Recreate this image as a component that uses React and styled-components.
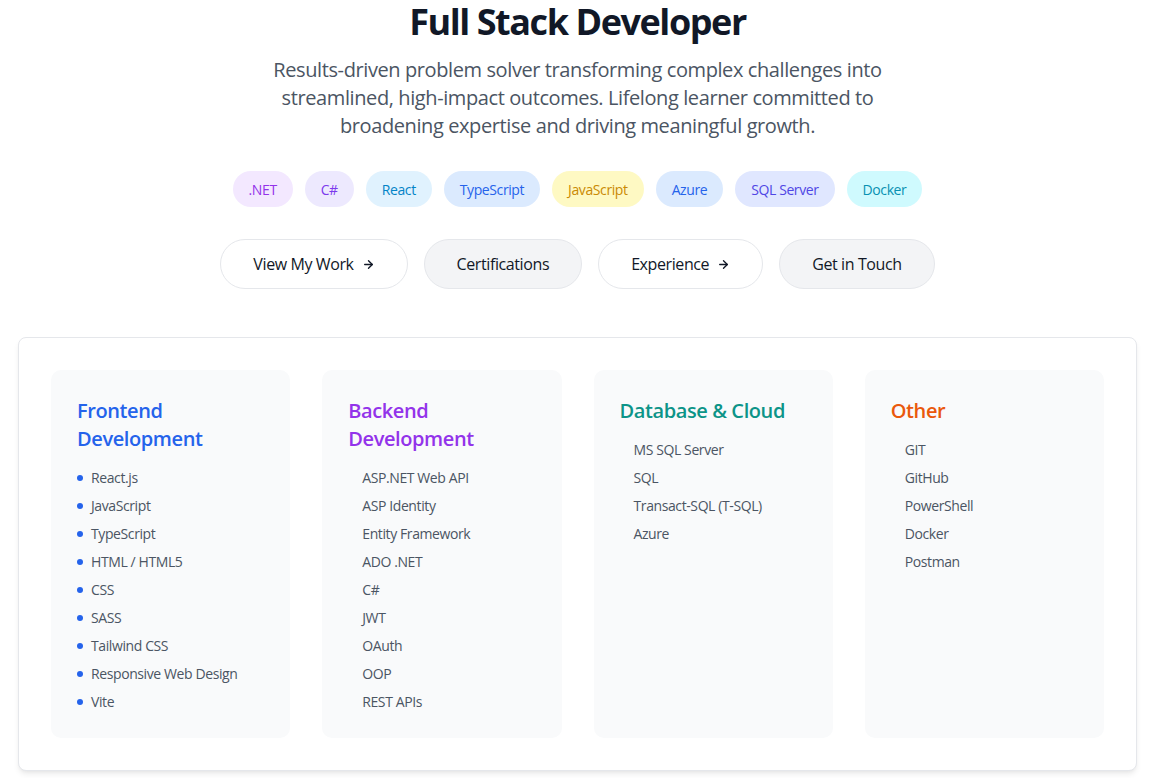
import React from "react";
import styled, { createGlobalStyle } from "styled-components";
import { ArrowRight } from "lucide-react";

const Global = createGlobalStyle`
  * { box-sizing: border-box; }
  html, body { margin: 0; padding: 0; background: #ffffff; }
  body {
    font-family: "Open Sans", "Noto Sans", "Liberation Sans", sans-serif;
    color: #111827;
    letter-spacing: -0.025em;
    -webkit-font-smoothing: antialiased;
  }
`;

const Page = styled.main`
  display: flex;
  flex-direction: column;
  align-items: center;
  padding: 2px 18px 40px;
`;

const Title = styled.h1`
  margin: 0 0 14px;
  font-size: 36px;
  line-height: 40px;
  font-weight: 700;
  letter-spacing: -0.04em;
  color: #111827;
  text-align: center;
`;

const Lead = styled.p`
  margin: 0 0 31px;
  max-width: 672px;
  font-size: 20px;
  line-height: 28px;
  color: #4b5563;
  text-align: center;
`;

const TagRow = styled.div`
  display: flex;
  flex-wrap: wrap;
  justify-content: center;
  gap: 12px;
  margin-bottom: 32px;
`;

const Tag = styled.span`
  display: inline-flex;
  align-items: center;
  height: 36px;
  padding: 0 16px;
  border-radius: 999px;
  font-size: 14px;
  background: ${(p) => p.$bg};
  color: ${(p) => p.$fg};
`;

const ButtonRow = styled.div`
  display: flex;
  justify-content: center;
  gap: 16px;
  margin-bottom: 48px;
`;

const Button = styled.button`
  display: inline-flex;
  align-items: center;
  gap: 8px;
  height: 50px;
  padding: 0 32px;
  border-radius: 999px;
  border: 1px solid #e5e7eb;
  background: ${(p) => (p.$muted ? "#f3f4f6" : "#ffffff")};
  color: #111827;
  font-family: inherit;
  letter-spacing: inherit;
  font-size: 16px;
  cursor: pointer;
`;

const Panel = styled.section`
  width: 100%;
  border: 1px solid #e5e7eb;
  border-radius: 8px;
  background: #ffffff;
  box-shadow: 0 4px 6px -1px rgba(0, 0, 0, 0.08), 0 2px 4px -2px rgba(0, 0, 0, 0.06);
  padding: 32px;
  display: grid;
  grid-template-columns: repeat(4, 1fr);
  gap: 32px;
`;

const Column = styled.div`
  background: #f9fafb;
  border-radius: 10px;
  padding: 27px 24px 26px 26px;
`;

const ColumnTitle = styled.h3`
  margin: 0 0 15px;
  font-size: 20px;
  line-height: 28px;
  font-weight: 600;
  color: ${(p) => p.$color};
`;

const List = styled.ul`
  list-style: none;
  margin: 0;
  padding: 0;
  display: flex;
  flex-direction: column;
  gap: 8px;
`;

const Item = styled.li`
  display: flex;
  align-items: center;
  gap: 8px;
  font-size: 14px;
  line-height: 20px;
  color: #4b5563;
`;

const Dot = styled.span`
  width: 6px;
  height: 6px;
  border-radius: 50%;
  flex: none;
  background: ${(p) => (p.$show ? p.$color : "transparent")};
`;

const tags = [
  [".NET", "#f3e8ff", "#9333ea"],
  ["C#", "#ede9fe", "#7c3aed"],
  ["React", "#e0f2fe", "#0284c7"],
  ["TypeScript", "#dbeafe", "#2563eb"],
  ["JavaScript", "#fef9c3", "#ca8a04"],
  ["Azure", "#dbeafe", "#2563eb"],
  ["SQL Server", "#e0e7ff", "#4f46e5"],
  ["Docker", "#cffafe", "#0891b2"],
];

const columns = [
  {
    title: "Frontend Development",
    color: "#2563eb",
    bullets: true,
    items: [
      "React.js",
      "JavaScript",
      "TypeScript",
      "HTML / HTML5",
      "CSS",
      "SASS",
      "Tailwind CSS",
      "Responsive Web Design",
      "Vite",
    ],
  },
  {
    title: "Backend Development",
    color: "#9333ea",
    items: [
      "ASP.NET Web API",
      "ASP Identity",
      "Entity Framework",
      "ADO .NET",
      "C#",
      "JWT",
      "OAuth",
      "OOP",
      "REST APIs",
    ],
  },
  {
    title: "Database & Cloud",
    color: "#0d9488",
    items: ["MS SQL Server", "SQL", "Transact-SQL (T-SQL)", "Azure"],
  },
  {
    title: "Other",
    color: "#ea580c",
    items: ["GIT", "GitHub", "PowerShell", "Docker", "Postman"],
  },
];

export default function App() {
  return (
    <>
      <Global />
      <Page>
        <Title>Full Stack Developer</Title>
        <Lead>
          Results-driven problem solver transforming complex challenges into
          streamlined, high-impact outcomes. Lifelong learner committed to
          broadening expertise and driving meaningful growth.
        </Lead>
        <TagRow>
          {tags.map(([t, bg, fg]) => (
            <Tag key={t} $bg={bg} $fg={fg}>
              {t}
            </Tag>
          ))}
        </TagRow>
        <ButtonRow>
          <Button>
            View My Work <ArrowRight size={13} strokeWidth={2.5} />
          </Button>
          <Button $muted>Certifications</Button>
          <Button>
            Experience <ArrowRight size={13} strokeWidth={2.5} />
          </Button>
          <Button $muted>Get in Touch</Button>
        </ButtonRow>
        <Panel>
          {columns.map((c) => (
            <Column key={c.title}>
              <ColumnTitle $color={c.color}>{c.title}</ColumnTitle>
              <List>
                {c.items.map((i) => (
                  <Item key={i}>
                    <Dot $show={c.bullets} $color={c.color} />
                    {i}
                  </Item>
                ))}
              </List>
            </Column>
          ))}
        </Panel>
      </Page>
    </>
  );
}
